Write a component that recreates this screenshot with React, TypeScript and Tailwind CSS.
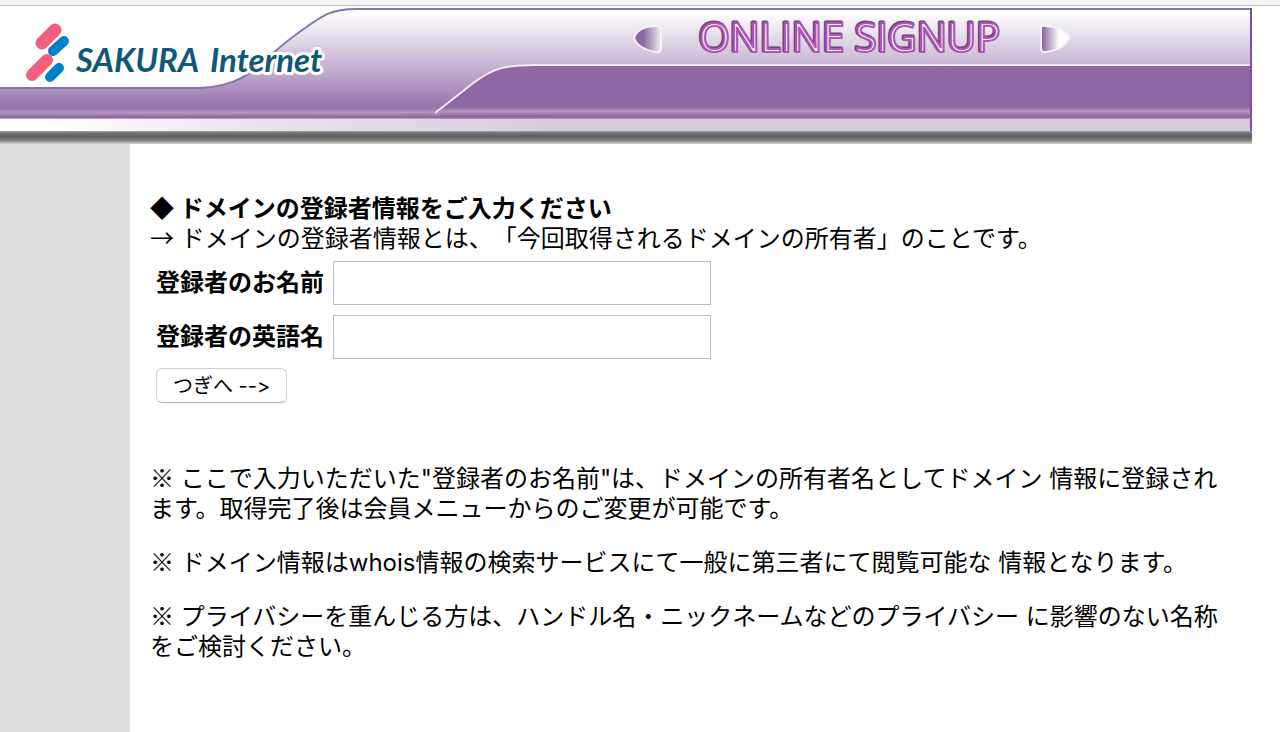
import { useState } from "react";

const fields = [
    { id: "name", label: "登録者のお名前" },
    { id: "name-en", label: "登録者の英語名" },
];

const notes = [
    "ここで入力いただいた\"登録者のお名前\"は、ドメインの所有者名としてドメイン 情報に登録されます。取得完了後は会員メニューからのご変更が可能です。",
    "ドメイン情報はwhois情報の検索サービスにて一般に第三者にて閲覧可能な 情報となります。",
    "プライバシーを重んじる方は、ハンドル名・ニックネームなどのプライバシー に影響のない名称をご検討ください。",
];

// Full-width symbols, always taken from the Japanese font
function Mark({ children }: { children: string }) {
    return <span className="font-['Noto_Sans_CJK_JP',sans-serif] leading-none">{children}</span>;
}

function Banner() {
    return (
        <svg viewBox="0 6 1252 138" className="block w-full" role="img" aria-label="SAKURA Internet ONLINE SIGNUP">
            <defs>
                <linearGradient id="sky" x1="0" y1="10" x2="0" y2="120" gradientUnits="userSpaceOnUse">
                    <stop offset="0" stopColor="#ffffff" />
                    <stop offset="0.05" stopColor="#fbfafc" />
                    <stop offset="0.27" stopColor="#e0d8e7" />
                    <stop offset="0.49" stopColor="#c8b6d4" />
                    <stop offset="0.72" stopColor="#ad90bf" />
                    <stop offset="0.87" stopColor="#9873ac" />
                    <stop offset="0.9" stopColor="#9d79ae" />
                    <stop offset="0.93" stopColor="#b297bd" />
                    <stop offset="0.955" stopColor="#a07dab" />
                    <stop offset="0.975" stopColor="#8b6098" />
                    <stop offset="1" stopColor="#e6dcea" />
                </linearGradient>
                <linearGradient id="edge" x1="0" y1="107" x2="0" y2="119" gradientUnits="userSpaceOnUse">
                    <stop offset="0" stopColor="#8e67a3" />
                    <stop offset="0.35" stopColor="#b095bc" />
                    <stop offset="0.5" stopColor="#a98bb5" />
                    <stop offset="0.8" stopColor="#8d6399" />
                    <stop offset="1" stopColor="#b795bb" />
                </linearGradient>
                <linearGradient id="stripe">
                    <stop offset="0.04" stopColor="#ffffff" />
                    <stop offset="0.2" stopColor="#eae4ef" />
                    <stop offset="0.45" stopColor="#d8cade" />
                </linearGradient>
                <linearGradient id="bar" x1="0" y1="0" x2="0" y2="1">
                    <stop offset="0" stopColor="#a5a5a5" />
                    <stop offset="0.15" stopColor="#737373" />
                    <stop offset="0.4" stopColor="#606060" />
                    <stop offset="0.7" stopColor="#7d7d7d" />
                    <stop offset="1" stopColor="#cfcfcf" />
                </linearGradient>
                <linearGradient id="arrow">
                    <stop offset="0.35" stopColor="#8d67a4" />
                    <stop offset="0.95" stopColor="#e9e2ee" />
                </linearGradient>
                <linearGradient id="arrowNext">
                    <stop offset="0.05" stopColor="#8d67a4" />
                    <stop offset="0.65" stopColor="#ffffff" />
                </linearGradient>
            </defs>

            <rect y="6" width="1252" height="138" fill="#ffffff" />
            <path d="M0 88H200C250 86 258 62 294 36C325 13 332 9 357 9H1250V119H0Z" fill="url(#sky)" />
            <path d="M0 88H200C250 86 258 62 294 36C325 13 332 9 357 9H1250" fill="none" stroke="#8177ad" strokeWidth="2" />

            {/* Lower right panel */}
            <path d="M436 113L472 84C494 67 507 65 536 65H1250V109H445Z" fill="#8e67a3" />
            <rect x="440" y="107" width="810" height="12" fill="url(#edge)" />
            <path d="M435 113L472 84C494 67 507 65 536 65H1250" fill="none" stroke="#f0eaf4" strokeWidth="2" />

            <rect y="119" width="1250" height="12" fill="url(#stripe)" />
            <path d="M1251 8V132" stroke="#7c4daa" strokeWidth="2" />
            <rect y="131" width="1252" height="13" fill="url(#bar)" />

            <g strokeLinecap="round" strokeLinejoin="round" strokeWidth="2" stroke="#f5f1f7">
                <path d="M634 38Q638 26 657 26Q661 26 661 31V48Q661 53 656 52Q638 49 634 38Z" fill="url(#arrow)" />
                <path d="M1041 28Q1041 25 1046 26Q1065 27 1069 38Q1065 49 1046 52Q1041 53 1041 48Z" fill="url(#arrowNext)" />
            </g>

            {/* Embossed title */}
            <g fontFamily="'Open Sans', sans-serif" fontSize="40" strokeLinejoin="round">
                <text x="698" y="51" fill="#74427c" stroke="#74427c" strokeWidth="3" aria-hidden="true">ONLINE SIGNUP</text>
                <text x="699" y="52" fill="#fbf5fc" stroke="#ad57b4" strokeWidth="2">ONLINE SIGNUP</text>
            </g>

            {/* Logo */}
            <g strokeLinecap="round" fill="none">
                <path d="M42 43L55 30" stroke="#f15f7c" strokeWidth="13" />
                <path d="M32 75L47 60" stroke="#f15f7c" strokeWidth="12" />
                <path d="M53 51L64 41" stroke="#0082ca" strokeWidth="10" />
                <path d="M50 77L59 68" stroke="#0082ca" strokeWidth="10" />
            </g>
            <g
                fontFamily="Lato, sans-serif"
                fontSize="33"
                fontStyle="italic"
                fontWeight="700"
                fill="#10587a"
                stroke="#ffffff"
                strokeWidth="6"
                strokeLinejoin="round"
                paintOrder="stroke"
            >
                <text x="76" y="72">SAKURA</text>
                <text x="210" y="72">Internet</text>
            </g>
        </svg>
    );
}

export default function App() {
    const [values, setValues] = useState<Record<string, string>>({});

    return (
        <div className="flex min-h-screen flex-col bg-white font-[Inter,'Noto_Sans_CJK_JP',sans-serif] text-2xl leading-[30px] text-black [font-variant-ligatures:no-contextual] [text-spacing-trim:space-all]" lang="ja">
            <div className="h-1.5 border-b border-[#c0c0c0] bg-[#f4f4f4]" />
            <header className="pr-7">
                <Banner />
            </header>

            <div className="flex flex-1">
                <aside className="w-[130px] shrink-0 bg-[#dfdfdf]" />
                <main className="flex-1 pt-[50px] pr-12 pb-16 pl-5">
                    <h1 className="font-bold"><Mark>◆</Mark> ドメインの登録者情報をご入力ください</h1>
                    <p><Mark>→</Mark> ドメインの登録者情報とは、「今回取得されるドメインの所有者」のことです。</p>

                    <form className="mt-[7px] ml-1.5" onSubmit={(e) => e.preventDefault()}>
                        <div className="flex flex-col gap-2.5">
                            {fields.map((f) => (
                                <div key={f.id} className="flex items-center gap-[9px]">
                                    <label htmlFor={f.id} className="font-bold">{f.label}</label>
                                    <input
                                        id={f.id}
                                        type="text"
                                        value={values[f.id] ?? ""}
                                        onChange={(e) => setValues({ ...values, [f.id]: e.target.value })}
                                        className="h-11 w-[378px] border border-[#bdbdbd] bg-white px-2 outline-none"
                                    />
                                </div>
                            ))}
                        </div>
                        <button
                            type="submit"
                            className="mt-[9px] h-[35px] rounded-md border border-[#cfcfcf] border-b-[#b5b5b5] bg-white px-4 text-xl leading-8 shadow-xs"
                        >
                            つぎへ --&gt;
                        </button>
                    </form>

                    <div className="mt-[61px] flex flex-col gap-6">
                        {notes.map((note) => (
                            <p key={note}><Mark>※</Mark> {note}</p>
                        ))}
                    </div>
                </main>
            </div>
        </div>
    );
}
